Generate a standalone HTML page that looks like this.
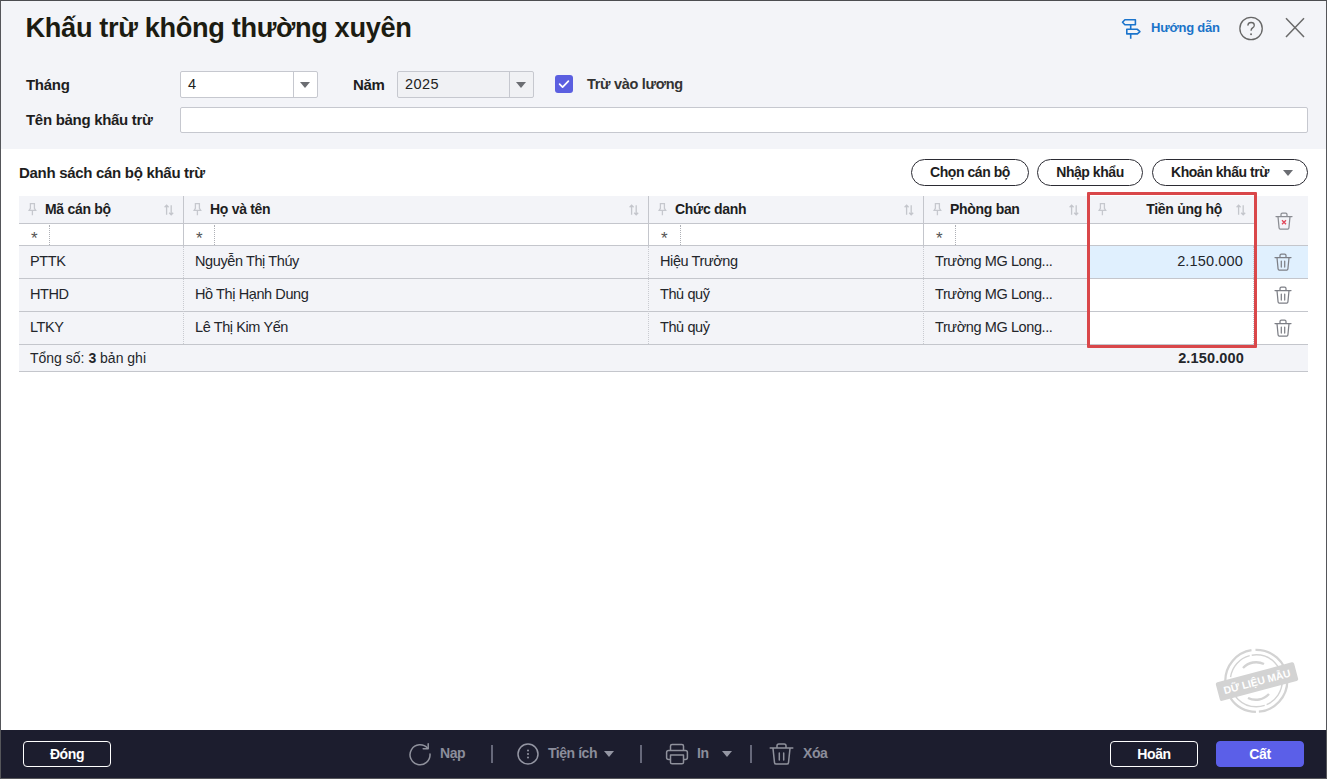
<!DOCTYPE html>
<html><head><meta charset="utf-8">
<style>
*{box-sizing:border-box;margin:0;padding:0}
html,body{width:1327px;height:779px;overflow:hidden;background:#fff}
body{font-family:"Liberation Sans",sans-serif;color:#1f1f1f;position:relative;font-size:14.5px}
.abs{position:absolute}
#frame{position:absolute;left:0;top:0;width:1327px;height:779px;border:1px solid #55565a;border-top:1px solid #4c4d50;pointer-events:none;z-index:50}
#hdr{position:absolute;left:1px;top:1px;width:1325px;height:148px;background:#f3f4f8}
#title{left:25.6px;top:12px;font-size:27.2px;letter-spacing:-0.36px;font-weight:bold;color:#1c1c12;white-space:nowrap;line-height:32px}
.lbl{font-weight:bold;font-size:15px;letter-spacing:-0.3px;white-space:nowrap;line-height:20px;color:#1e1e1e}
.inp{background:#fff;border:1px solid #c6c8cf;border-radius:2px}
.combo .v{position:absolute;left:7px;top:0;line-height:25px;font-size:14.5px;color:#222}
.combo .dd{position:absolute;right:0;top:0;width:24px;height:100%;border-left:1px solid #c6c8cf}
.tri{position:absolute;width:0;height:0;border-left:5px solid transparent;border-right:5px solid transparent;border-top:6px solid #6b6d72}
.pill{position:absolute;height:27px;border:1px solid #2b2b33;border-radius:14px;background:#fff;font-weight:bold;font-size:14px;letter-spacing:-0.45px;line-height:25px;white-space:nowrap;color:#1e1e1e}
/* grid */
.cell{position:absolute;white-space:nowrap;overflow:hidden}
.hcell{background:#f3f4f8;font-weight:bold;font-size:14.5px;line-height:27px;color:#1e1e1e}
.dcell{background:#f3f4f8;font-size:14.5px;line-height:32px;color:#262626;padding-left:11px}
.hl{position:absolute;height:1px;background:#c4c6cc;left:19px;width:1289px}
.vl{position:absolute;width:1px;background:#c4c6cc}
.vd{position:absolute;width:0;border-left:1px dotted #c9cbd1}
.htxt{font-weight:bold;font-size:14px;letter-spacing:-0.3px;line-height:20px;color:#1e1e1e;white-space:nowrap}
.dtxt{font-size:14.5px;letter-spacing:-0.4px;line-height:20px;color:#23262b;white-space:nowrap}
.star{font-size:17px;line-height:17px;color:#555}
.num{letter-spacing:0.15px}
#foot{position:absolute;left:1px;top:730px;width:1325px;height:48px;background:#1c1d2e}
.fbtn{position:absolute;top:741px;height:26px;border:1px solid #fff;border-radius:4px;color:#fff;font-weight:bold;font-size:14px;letter-spacing:-0.4px;line-height:24px;text-align:center}
.ftxt{position:absolute;color:#8b8d9b;font-weight:bold;font-size:14px;letter-spacing:-0.45px;line-height:20px;top:743px;white-space:nowrap}
.fsep{position:absolute;top:745px;width:2px;height:18px;background:#66687a}
</style></head><body>
<div id="hdr"></div>
<div id="title" class="abs">Khấu trừ không thường xuyên</div>

<!-- top right -->
<svg class="abs" style="left:1116px;top:14px" width="30" height="28" viewBox="0 0 30 28"><path d="M8.9 5.8h10.5v5H8.9L6.5 8.3z M10.8 15.3h10.6l2.5 2.3-2.5 2.3H10.8z M14.7 10.8v4.5 M14.7 19.9v4.9" fill="none" stroke="#1b74cc" stroke-width="1.6" stroke-linejoin="round"/></svg>
<div class="abs" style="left:1151px;top:18px;color:#1a73c9;font-weight:bold;font-size:13px;letter-spacing:-0.2px;line-height:20px;white-space:nowrap">Hướng dẫn</div>
<svg class="abs" style="left:1238px;top:15px" width="27" height="27" viewBox="0 0 27 27"><circle cx="13.05" cy="13.5" r="11.2" fill="none" stroke="#666" stroke-width="1.3"/><path d="M9.9 10.2c.2-1.7 1.4-2.7 3.2-2.7 1.9 0 3.2 1.1 3.2 2.7 0 1.3-.7 2-1.7 2.7-1 .7-1.5 1.2-1.5 2.4" fill="none" stroke="#666" stroke-width="1.3" stroke-linecap="round"/><circle cx="13.05" cy="19.3" r="0.95" fill="#666"/></svg>
<svg class="abs" style="left:1284px;top:16px" width="23" height="23" viewBox="0 0 23 23"><path d="M2 2.2L20 21 M20 2.2L2 21" fill="none" stroke="#6a6a6a" stroke-width="1.5"/></svg>

<!-- form -->
<div class="abs lbl" style="left:26px;top:75px">Tháng</div>
<div class="abs inp combo" style="left:180px;top:71px;width:138px;height:27px"><span class="v">4</span><div class="dd"><div class="tri" style="left:6px;top:10px"></div></div></div>
<div class="abs lbl" style="left:353px;top:75px">Năm</div>
<div class="abs inp combo" style="left:397px;top:71px;width:137px;height:27px;background:#f0f1f4"><span class="v" style="letter-spacing:0.4px">2025</span><div class="dd"><div class="tri" style="left:6px;top:10px"></div></div></div>
<div class="abs" style="left:555px;top:75px;width:18px;height:18px;background:#5b5fe0;border-radius:3px"><svg width="18" height="18" viewBox="0 0 18 18" style="display:block"><path d="M4.6 9.2l3 3 5.8-6" fill="none" stroke="#fff" stroke-width="1.7" stroke-linecap="round" stroke-linejoin="round"/></svg></div>
<div class="abs lbl" style="left:587px;top:74px;font-size:14.5px;color:#333">Trừ vào lương</div>
<div class="abs lbl" style="left:26px;top:110px">Tên bảng khấu trừ</div>
<div class="abs inp" style="left:180px;top:107px;width:1128px;height:26px"></div>

<div class="abs lbl" style="left:19px;top:163px">Danh sách cán bộ khấu trừ</div>
<div class="pill" style="left:911px;top:159px;width:118px;text-align:center">Chọn cán bộ</div>
<div class="pill" style="left:1037px;top:159px;width:106px;text-align:center">Nhập khẩu</div>
<div class="pill" style="left:1152px;top:159px;width:156px;padding-left:18px">Khoản khấu trừ<div class="tri" style="left:130px;top:10px"></div></div>

<div id="grid">
<div class="abs" style="left:19px;top:196px;width:1289px;height:27px;background:#f3f4f8"></div>
<div class="abs" style="left:1254px;top:196px;width:54px;height:49px;background:#f3f4f8"></div>
<div class="abs" style="left:19px;top:246px;width:1070px;height:32px;background:#f3f4f8"></div>
<div class="abs" style="left:19px;top:279px;width:1070px;height:32px;background:#f3f4f8"></div>
<div class="abs" style="left:19px;top:312px;width:1070px;height:32px;background:#f3f4f8"></div>
<div class="abs" style="left:1089px;top:246px;width:219px;height:32px;background:#e0f0fe"></div>
<div class="abs" style="left:19px;top:345px;width:1289px;height:26px;background:#f3f4f8"></div>
<div class="hl" style="top:223px;width:1235px"></div>
<div class="hl" style="top:245px;width:1289px"></div>
<div class="hl" style="top:278px;width:1289px"></div>
<div class="hl" style="top:311px;width:1289px"></div>
<div class="hl" style="top:344px;width:1289px"></div>
<div class="hl" style="top:371px;width:1289px"></div>
<div class="vl" style="left:183px;top:196px;height:49px"></div>
<div class="vd" style="left:183px;top:246px;height:98px"></div>
<div class="vl" style="left:648px;top:196px;height:49px"></div>
<div class="vd" style="left:648px;top:246px;height:98px"></div>
<div class="vl" style="left:923px;top:196px;height:49px"></div>
<div class="vd" style="left:923px;top:246px;height:98px"></div>
<div class="vl" style="left:1088px;top:196px;height:49px"></div>
<div class="vd" style="left:1088px;top:246px;height:98px"></div>
<div class="vd" style="left:1253px;top:246px;height:98px"></div>
<svg class="abs" style="left:28px;top:203px" width="9" height="13" viewBox="0 0 9 13"><path d="M2.400 0.700h4v4.600l1.300 2.100H1.100l1.300-2.100z M4.400 7.400v4.800" fill="none" stroke="#c6c8ce" stroke-width="1.3"/></svg>
<svg class="abs" style="left:164px;top:204px" width="10" height="12" viewBox="0 0 10 12"><path d="M2.600 10.800V1.200M0.600 3.200L2.600 1.200l2 2 M7.200 1.200v9.600M5.200 8.800L7.200 10.800l2-2" fill="none" stroke="#c4c6cc" stroke-width="1.3"/></svg>
<div class="abs htxt" style="left:45px;top:199px">Mã cán bộ</div>
<svg class="abs" style="left:193px;top:203px" width="9" height="13" viewBox="0 0 9 13"><path d="M2.400 0.700h4v4.600l1.300 2.100H1.100l1.300-2.100z M4.400 7.400v4.800" fill="none" stroke="#c6c8ce" stroke-width="1.3"/></svg>
<svg class="abs" style="left:629px;top:204px" width="10" height="12" viewBox="0 0 10 12"><path d="M2.600 10.800V1.200M0.600 3.200L2.600 1.200l2 2 M7.200 1.200v9.600M5.200 8.800L7.200 10.800l2-2" fill="none" stroke="#c4c6cc" stroke-width="1.3"/></svg>
<div class="abs htxt" style="left:210px;top:199px">Họ và tên</div>
<svg class="abs" style="left:658px;top:203px" width="9" height="13" viewBox="0 0 9 13"><path d="M2.400 0.700h4v4.600l1.300 2.100H1.100l1.300-2.100z M4.400 7.400v4.800" fill="none" stroke="#c6c8ce" stroke-width="1.3"/></svg>
<svg class="abs" style="left:904px;top:204px" width="10" height="12" viewBox="0 0 10 12"><path d="M2.600 10.800V1.200M0.600 3.200L2.600 1.200l2 2 M7.200 1.200v9.600M5.200 8.800L7.200 10.800l2-2" fill="none" stroke="#c4c6cc" stroke-width="1.3"/></svg>
<div class="abs htxt" style="left:675px;top:199px">Chức danh</div>
<svg class="abs" style="left:933px;top:203px" width="9" height="13" viewBox="0 0 9 13"><path d="M2.400 0.700h4v4.600l1.300 2.100H1.100l1.300-2.100z M4.400 7.400v4.800" fill="none" stroke="#c6c8ce" stroke-width="1.3"/></svg>
<svg class="abs" style="left:1069px;top:204px" width="10" height="12" viewBox="0 0 10 12"><path d="M2.600 10.800V1.200M0.600 3.200L2.600 1.200l2 2 M7.200 1.200v9.600M5.200 8.800L7.200 10.800l2-2" fill="none" stroke="#c4c6cc" stroke-width="1.3"/></svg>
<div class="abs htxt" style="left:950px;top:199px">Phòng ban</div>
<svg class="abs" style="left:1098px;top:203px" width="9" height="13" viewBox="0 0 9 13"><path d="M2.400 0.700h4v4.600l1.300 2.100H1.100l1.300-2.100z M4.400 7.400v4.800" fill="none" stroke="#c6c8ce" stroke-width="1.3"/></svg>
<svg class="abs" style="left:1236px;top:204px" width="10" height="12" viewBox="0 0 10 12"><path d="M2.600 10.800V1.200M0.600 3.200L2.600 1.200l2 2 M7.200 1.200v9.600M5.200 8.800L7.200 10.800l2-2" fill="none" stroke="#c4c6cc" stroke-width="1.3"/></svg>
<div class="abs htxt" style="right:105px;top:199px">Tiền ủng hộ</div>
<div class="abs star" style="left:31px;top:230px">*</div>
<div class="vd" style="left:49px;top:225px;height:20px;border-color:#aeb0b6"></div>
<div class="abs star" style="left:196px;top:230px">*</div>
<div class="vd" style="left:214px;top:225px;height:20px;border-color:#aeb0b6"></div>
<div class="abs star" style="left:661px;top:230px">*</div>
<div class="vd" style="left:680px;top:225px;height:20px;border-color:#aeb0b6"></div>
<div class="abs star" style="left:936px;top:230px">*</div>
<div class="vd" style="left:955px;top:225px;height:20px;border-color:#aeb0b6"></div>
<div class="abs dtxt" style="left:30px;top:251px">PTTK</div>
<div class="abs dtxt" style="left:195px;top:251px">Nguyễn Thị Thúy</div>
<div class="abs dtxt" style="left:660px;top:251px">Hiệu Trưởng</div>
<div class="abs dtxt" style="left:935px;top:251px">Trường MG Long...</div>
<svg class="abs" style="left:1274px;top:253px" width="18" height="18" viewBox="0 0 18 18"><path d="M1 4.5h16 M6 4.2V2.6c0-.9.6-1.4 1.4-1.4h3.2c.8 0 1.4.5 1.4 1.4v1.6 M3 4.8l1.1 11.2c.1.7.5 1 1.1 1h7.6c.6 0 1-.3 1.1-1L15 4.8 M7.3 8v6 M10.7 8v6" fill="none" stroke="#7d7f86" stroke-width="1.25" stroke-linecap="round"/></svg>
<div class="abs dtxt" style="left:30px;top:284px">HTHD</div>
<div class="abs dtxt" style="left:195px;top:284px">Hồ Thị Hạnh Dung</div>
<div class="abs dtxt" style="left:660px;top:284px">Thủ quỹ</div>
<div class="abs dtxt" style="left:935px;top:284px">Trường MG Long...</div>
<svg class="abs" style="left:1274px;top:286px" width="18" height="18" viewBox="0 0 18 18"><path d="M1 4.5h16 M6 4.2V2.6c0-.9.6-1.4 1.4-1.4h3.2c.8 0 1.4.5 1.4 1.4v1.6 M3 4.8l1.1 11.2c.1.7.5 1 1.1 1h7.6c.6 0 1-.3 1.1-1L15 4.8 M7.3 8v6 M10.7 8v6" fill="none" stroke="#7d7f86" stroke-width="1.25" stroke-linecap="round"/></svg>
<div class="abs dtxt" style="left:30px;top:317px">LTKY</div>
<div class="abs dtxt" style="left:195px;top:317px">Lê Thị Kim Yến</div>
<div class="abs dtxt" style="left:660px;top:317px">Thủ quỷ</div>
<div class="abs dtxt" style="left:935px;top:317px">Trường MG Long...</div>
<svg class="abs" style="left:1274px;top:319px" width="18" height="18" viewBox="0 0 18 18"><path d="M1 4.5h16 M6 4.2V2.6c0-.9.6-1.4 1.4-1.4h3.2c.8 0 1.4.5 1.4 1.4v1.6 M3 4.8l1.1 11.2c.1.7.5 1 1.1 1h7.6c.6 0 1-.3 1.1-1L15 4.8 M7.3 8v6 M10.7 8v6" fill="none" stroke="#7d7f86" stroke-width="1.25" stroke-linecap="round"/></svg>
<div class="abs dtxt num" style="right:84px;top:251px">2.150.000</div>
<div class="abs dtxt" style="left:30px;top:348px;font-size:14px;letter-spacing:0">Tổng số: <b>3</b> bản ghi</div>
<div class="abs dtxt num" style="right:83px;top:348px;font-weight:bold">2.150.000</div>
<svg class="abs" style="left:1275px;top:212px" width="18" height="18" viewBox="0 0 18 18"><path d="M1 4.5h16 M6 4.2V2.6c0-.9.6-1.4 1.4-1.4h3.2c.8 0 1.4.5 1.4 1.4v1.6 M3 4.8l1.1 11.2c.1.7.5 1 1.1 1h7.6c.6 0 1-.3 1.1-1L15 4.8 " fill="none" stroke="#8a8c92" stroke-width="1.25" stroke-linecap="round"/><path d="M7 8.2l4 4M11 8.2l-4 4" stroke="#e0475a" stroke-width="1.3" fill="none"/></svg>
<div class="abs" style="left:1087px;top:192px;width:170px;height:156px;border:3px solid #d9474a;border-radius:1px"></div>
</div><!--/grid-->

<svg class="abs" style="left:1206px;top:640px" width="104" height="84" viewBox="1206 640 104 84">
<g fill="none" stroke="#d3d3d3">
<circle cx="1256.300" cy="680.800" r="31" stroke-width="2.300" stroke-dasharray="46 3 30 2 60 4"/>
<circle cx="1256.300" cy="680.800" r="26" stroke-width="1.400" stroke-dasharray="30 2 50 3"/>
<path d="M1243 668a18 18 0 0 1 21-4" stroke-width="2.400"/>
<path d="M1269 694a18 18 0 0 1-21 4" stroke-width="2.400"/>
</g>
<g transform="rotate(-15 1257 681.600)">
<rect x="1216.500" y="672" width="81" height="19.200" rx="2" fill="#d3d3d3"/>
<text x="1257" y="685.400" text-anchor="middle" font-family="Liberation Sans, sans-serif" font-weight="bold" font-size="10.500" fill="#fff" textLength="69" lengthAdjust="spacingAndGlyphs">DỮ LIỆU MẪU</text>
</g></svg>
<div id="foot"></div>
<div class="fbtn" style="left:23px;width:88px">Đóng</div>
<div class="fbtn" style="left:1110px;width:88px">Hoãn</div>
<div class="fbtn" style="left:1216px;width:88px;background:#5b5fe8;border-color:#5b5fe8">Cất</div>
<div class="ftxt" style="left:440px">Nạp</div>
<div class="fsep" style="left:491px"></div>
<div class="ftxt" style="left:548px">Tiện ích</div>
<div class="fsep" style="left:640px"></div>
<div class="ftxt" style="left:697px">In</div>
<div class="fsep" style="left:750px"></div>
<div class="ftxt" style="left:803px">Xóa</div>

<svg class="abs" style="left:408px;top:742px" width="24" height="24" viewBox="0 0 24 24"><path d="M19.6 6.2A10 10 0 1 0 22 12" fill="none" stroke="#8f919c" stroke-width="1.5" stroke-linecap="round"/><path d="M20.2 1.8v5h-5" fill="none" stroke="#8f919c" stroke-width="1.5" stroke-linecap="round" stroke-linejoin="round"/></svg>
<svg class="abs" style="left:516px;top:742px" width="24" height="24" viewBox="0 0 24 24"><circle cx="12" cy="12" r="10" fill="none" stroke="#9496a3" stroke-width="1.5"/><circle cx="12" cy="8.4" r="1" fill="#9496a3"/><circle cx="12" cy="12" r="1" fill="#9496a3"/><circle cx="12" cy="15.6" r="1" fill="#9496a3"/></svg>
<div class="tri" style="left:604px;top:751px;border-top-color:#9496a3"></div>
<svg class="abs" style="left:665px;top:742px" width="24" height="24" viewBox="0 0 24 24"><path d="M5.5 8.5V4c0-1 .6-1.6 1.6-1.6h9.8c1 0 1.6.6 1.6 1.6v4.5 M5.5 17.5H3.6c-1.2 0-2-.8-2-2v-5c0-1.2.8-2 2-2h16.8c1.2 0 2 .8 2 2v5c0 1.2-.8 2-2 2h-1.9 M5.5 13h13v7.2c0 1-.6 1.6-1.6 1.6H7.100c-1 0-1.600-.6-1.600-1.600z" fill="none" stroke="#8f919c" stroke-width="1.5" stroke-linejoin="round"/></svg>
<div class="tri" style="left:722px;top:751px;border-top-color:#9496a3"></div>
<svg class="abs" style="left:769px;top:742px" width="25" height="24" viewBox="0 0 25 24"><path d="M1.200 6h22.600 M8 5.800V3.800c0-1.100.7-1.800 1.800-1.800h5.400c1.100 0 1.800.7 1.800 1.800v2 M4 6.400l1.500 14.200c.1 1 .7 1.500 1.600 1.500h10.800c.9 0 1.500-.5 1.600-1.500L21 6.400 M10.300 11v7 M14.700 11v7" fill="none" stroke="#8f919c" stroke-width="1.5" stroke-linecap="round"/></svg>
<div id="frame"></div>
</body></html>
